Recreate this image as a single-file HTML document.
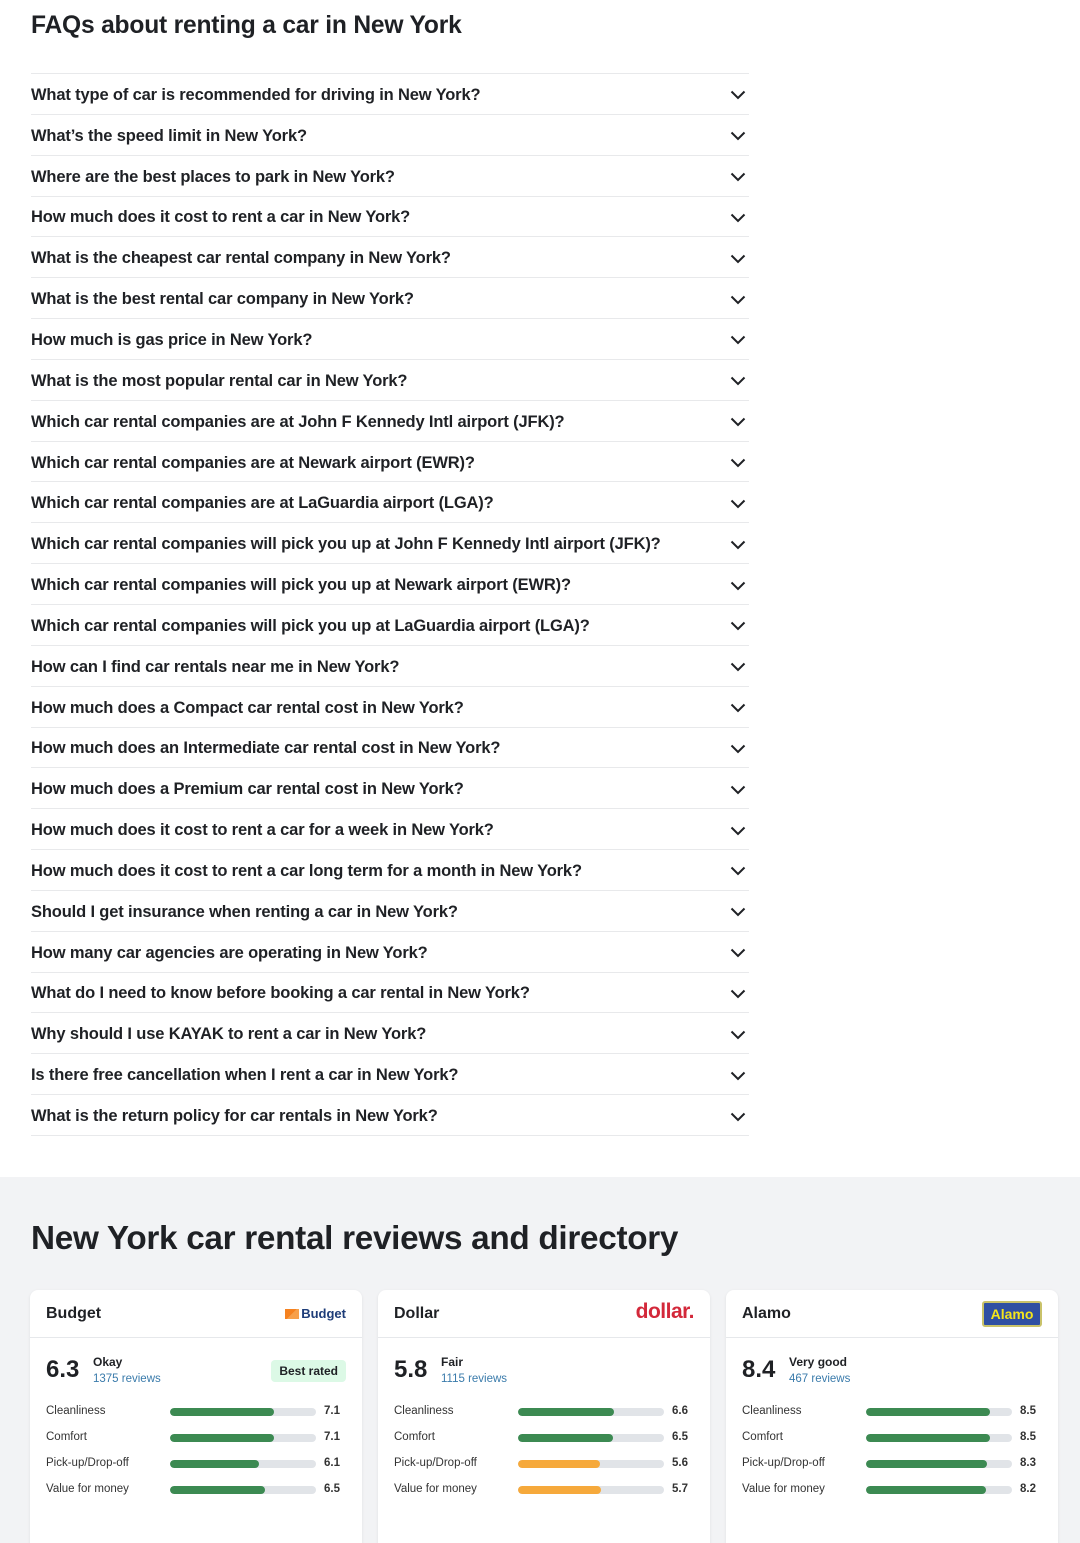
<!DOCTYPE html>
<html style="width:1080px;height:1543px;overflow:hidden"><head><meta charset="utf-8"><style>
*{box-sizing:border-box;margin:0;padding:0}
body{width:1080px;height:1543px;overflow:hidden;background:#fff;font-family:"Liberation Sans",sans-serif;color:#1f2125;position:relative}
h1{position:absolute;left:31px;top:12px;font-size:24.6px;font-weight:bold;letter-spacing:-0.2px}
.faq{position:absolute;left:31px;top:73px;width:718px;border-top:1px solid #e8e9eb}
.q{height:40.85px;padding-top:3px;border-bottom:1px solid #e8e9eb;display:flex;align-items:center;justify-content:space-between;font-size:16.5px;font-weight:bold;letter-spacing:-0.15px}
.q svg{margin-right:3px}
.grey{position:absolute;left:0;top:1177px;width:1080px;height:366px;background:#f2f3f5;overflow:hidden}
h2{position:absolute;left:31px;top:43px;font-size:33.3px;font-weight:bold;letter-spacing:-0.3px}
.card{position:absolute;top:113px;width:332px;height:280px;background:#fff;border-radius:8px;box-shadow:0 1px 3px rgba(0,0,0,.08)}
.hd{height:48px;border-bottom:1px solid #e6e8eb;display:flex;align-items:center;justify-content:space-between;padding:0 16px;font-size:16px;font-weight:bold}
.sc{position:relative;height:60px}
.big{position:absolute;left:16px;top:18px;font-size:24px;font-weight:bold}
.lab{position:absolute;left:63px;top:17px;font-size:12px;font-weight:bold}
.rv{position:absolute;left:63px;top:35px;font-size:11.5px;color:#3a7bab}
.best{position:absolute;right:16px;top:22px;background:#dcf9e6;border-radius:4px;padding:4px 8px;font-size:12px;font-weight:bold}
.row{position:relative;height:26px;font-size:11.5px;color:#333}
.row span.n{position:absolute;left:16px;top:7px}
.bar{position:absolute;left:140px;top:10px;width:146px;height:8px;border-radius:4px;background:#e1e4e8;overflow:hidden}
.bar i{display:block;height:100%;border-radius:4px;background:#3c8a52}
.bar i.o{background:#f6a93b}
.row b{position:absolute;left:294px;top:7px;font-size:11.5px}
</style></head><body>
<h1>FAQs about renting a car in New York</h1>
<div class="faq" id="f"></div>
<div class="grey">
<h2>New York car rental reviews and directory</h2>
<div class="card" style="left:30px">
<div class="hd">Budget<span style="display:flex;align-items:center;font-size:13px;color:#1d3c78;font-weight:bold"><span style="width:14px;height:10px;background:linear-gradient(135deg,#f58220 50%,#f7a04a 50%);margin-right:2px"></span>Budget</span></div>
<div class="sc"><div class="big">6.3</div><div class="lab">Okay</div><div class="rv">1375 reviews</div><div class="best">Best rated</div></div>
<div class="row"><span class="n">Cleanliness</span><div class="bar"><i style="width:71%"></i></div><b>7.1</b></div>
<div class="row"><span class="n">Comfort</span><div class="bar"><i style="width:71%"></i></div><b>7.1</b></div>
<div class="row"><span class="n">Pick-up/Drop-off</span><div class="bar"><i style="width:61%"></i></div><b>6.1</b></div>
<div class="row"><span class="n">Value for money</span><div class="bar"><i style="width:65%"></i></div><b>6.5</b></div>
</div>
<div class="card" style="left:378px">
<div class="hd">Dollar<span style="color:#d3283a;font-size:21px;font-weight:bold;letter-spacing:-0.5px;margin-top:-4px">dollar.</span></div>
<div class="sc"><div class="big">5.8</div><div class="lab">Fair</div><div class="rv">1115 reviews</div></div>
<div class="row"><span class="n">Cleanliness</span><div class="bar"><i style="width:66%"></i></div><b>6.6</b></div>
<div class="row"><span class="n">Comfort</span><div class="bar"><i style="width:65%"></i></div><b>6.5</b></div>
<div class="row"><span class="n">Pick-up/Drop-off</span><div class="bar"><i class="o" style="width:56%"></i></div><b>5.6</b></div>
<div class="row"><span class="n">Value for money</span><div class="bar"><i class="o" style="width:57%"></i></div><b>5.7</b></div>
</div>
<div class="card" style="left:726px">
<div class="hd">Alamo<span style="background:#2f4fa2;border:2px solid #c9c26a;border-radius:3px;color:#f4e51b;font-size:14px;font-weight:bold;padding:3px 5px;width:60px;text-align:center">Alamo</span></div>
<div class="sc"><div class="big">8.4</div><div class="lab">Very good</div><div class="rv">467 reviews</div></div>
<div class="row"><span class="n">Cleanliness</span><div class="bar"><i style="width:85%"></i></div><b>8.5</b></div>
<div class="row"><span class="n">Comfort</span><div class="bar"><i style="width:85%"></i></div><b>8.5</b></div>
<div class="row"><span class="n">Pick-up/Drop-off</span><div class="bar"><i style="width:83%"></i></div><b>8.3</b></div>
<div class="row"><span class="n">Value for money</span><div class="bar"><i style="width:82%"></i></div><b>8.2</b></div>
</div>
</div>
<script>
var qs=["What type of car is recommended for driving in New York?","What’s the speed limit in New York?","Where are the best places to park in New York?","How much does it cost to rent a car in New York?","What is the cheapest car rental company in New York?","What is the best rental car company in New York?","How much is gas price in New York?","What is the most popular rental car in New York?","Which car rental companies are at John F Kennedy Intl airport (JFK)?","Which car rental companies are at Newark airport (EWR)?","Which car rental companies are at LaGuardia airport (LGA)?","Which car rental companies will pick you up at John F Kennedy Intl airport (JFK)?","Which car rental companies will pick you up at Newark airport (EWR)?","Which car rental companies will pick you up at LaGuardia airport (LGA)?","How can I find car rentals near me in New York?","How much does a Compact car rental cost in New York?","How much does an Intermediate car rental cost in New York?","How much does a Premium car rental cost in New York?","How much does it cost to rent a car for a week in New York?","How much does it cost to rent a car long term for a month in New York?","Should I get insurance when renting a car in New York?","How many car agencies are operating in New York?","What do I need to know before booking a car rental in New York?","Why should I use KAYAK to rent a car in New York?","Is there free cancellation when I rent a car in New York?","What is the return policy for car rentals in New York?"];
var h="";qs.forEach(function(q){h+='<div class="q"><span>'+q+'</span><svg width="16" height="10" viewBox="0 0 16 10"><path d="M1.5 1.5L8 8L14.5 1.5" fill="none" stroke="#1f2125" stroke-width="2"/></svg></div>'});
document.getElementById("f").innerHTML=h;
</script>
</body></html>
